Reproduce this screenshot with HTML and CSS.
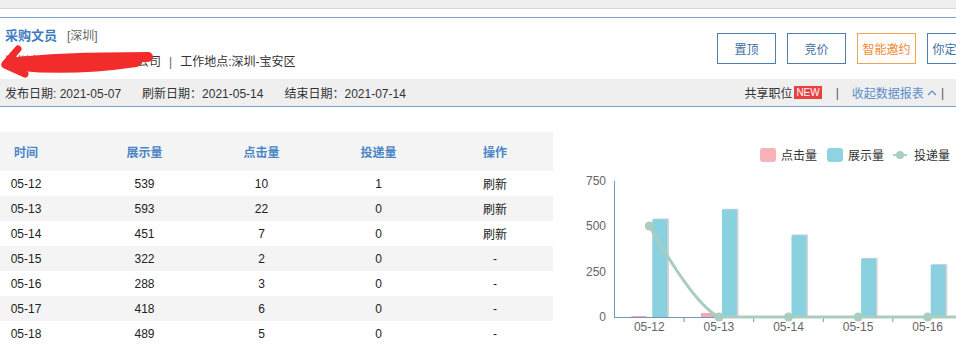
FILE: index.html
```html
<!DOCTYPE html>
<html lang="zh-CN">
<head>
<meta charset="utf-8">
<title>职位数据</title>
<link rel="stylesheet" href="styles.css">
</head>
<body>
<div class="topstrip"></div>
<div class="card">
  <div class="head">
    <div class="info">
      <div class="title-line"><span class="title">采购文员</span><span class="city">[深圳]</span></div>
      <div class="sub-line">
        <span class="company">深圳市某某某某科技有限公司</span><span class="sep">|</span><span>工作地点:深圳-宝安区</span>
        <svg class="scribble" width="160" height="36" viewBox="0 0 160 36">
          <g fill="none" stroke="#f22b2b" stroke-linecap="round" stroke-linejoin="round">
            <path d="M8 19 C40 15 100 13 147 13" stroke-width="10"/>
            <path d="M20 21 C60 25 100 22 135 17" stroke-width="12"/>
            <path d="M50 19 L125 16" stroke-width="14"/>
            <path d="M4 20 L17 5" stroke-width="7"/>
            <path d="M4 21 L24 30" stroke-width="7"/>
            <path d="M12 19 L40 22" stroke-width="9"/>
          </g>
        </svg>
      </div>
    </div>
    <div class="actions">
      <span class="btn">置顶</span>
      <span class="btn">竞价</span>
      <span class="btn btn-orange">智能邀约</span>
      <span class="btn">你定我推</span>
    </div>
  </div>
  <div class="bar">
    <div class="dates">
      <span>发布日期: 2021-05-07</span>
      <span>刷新日期：2021-05-14</span>
      <span>结束日期：2021-07-14</span>
    </div>
    <div class="bar-right">
      <span>共享职位</span><span class="new">NEW</span>
      <span class="pipe">|</span>
      <span class="link">收起数据报表</span>
      <svg class="caret" width="10" height="7" viewBox="0 0 10 7"><path d="M1 6 L5 2 L9 6" fill="none" stroke="#5b8ec7" stroke-width="1.2"/></svg>
      <span class="pipe2">|</span>
    </div>
  </div>
</div>
<div class="main">
  <div class="table">
    <div class="row thead"><span class="c1">时间</span><span>展示量</span><span>点击量</span><span>投递量</span><span>操作</span></div>
    <div class="row"><span class="c1">05-12</span><span>539</span><span>10</span><span>1</span><span>刷新</span></div>
    <div class="row alt"><span class="c1">05-13</span><span>593</span><span>22</span><span>0</span><span>刷新</span></div>
    <div class="row"><span class="c1">05-14</span><span>451</span><span>7</span><span>0</span><span>刷新</span></div>
    <div class="row alt"><span class="c1">05-15</span><span>322</span><span>2</span><span>0</span><span>-</span></div>
    <div class="row"><span class="c1">05-16</span><span>288</span><span>3</span><span>0</span><span>-</span></div>
    <div class="row alt"><span class="c1">05-17</span><span>418</span><span>6</span><span>0</span><span>-</span></div>
    <div class="row"><span class="c1">05-18</span><span>489</span><span>5</span><span>0</span><span>-</span></div>
  </div>
  <svg class="chart" width="403" height="218" viewBox="0 0 403 218">
    <g transform="translate(-553,-132)">
      <!-- legend -->
      <rect x="760" y="148" width="16" height="14" rx="3" fill="#f7b2b7"/>
      <text x="781" y="160" class="lg">点击量</text>
      <rect x="827" y="148" width="16" height="14" rx="3" fill="#8fd3e2"/>
      <text x="848" y="160" class="lg">展示量</text>
      <line x1="893" y1="155" x2="907" y2="155" stroke="#a9cdbf" stroke-width="2"/>
      <circle cx="900" cy="155" r="4" fill="#a9cdbf"/>
      <text x="914" y="160" class="lg">投递量</text>

      <!-- y axis -->
      <line x1="614.5" y1="181" x2="614.5" y2="317" stroke="#6b98bd" stroke-width="1"/>
      <text x="606" y="185" class="ax" text-anchor="end">750</text>
      <text x="606" y="230" class="ax" text-anchor="end">500</text>
      <text x="606" y="276" class="ax" text-anchor="end">250</text>
      <text x="606" y="321" class="ax" text-anchor="end">0</text>

      <!-- bars: shadow -->
      <g fill="#d4d4d4">
        <rect x="653.5" y="218.5" width="15.5" height="98.5"/>
        <rect x="723" y="208.7" width="15.5" height="108.3"/>
        <rect x="792.6" y="234.4" width="15.5" height="82.6"/>
        <rect x="862.2" y="257.8" width="15.5" height="59.2"/>
        <rect x="931.8" y="264" width="15.5" height="53"/>
      </g>
      <g fill="#8ad1df">
        <rect x="652.3" y="219.3" width="15" height="97.7"/>
        <rect x="721.9" y="209.5" width="15" height="107.5"/>
        <rect x="791.5" y="235.2" width="15" height="81.8"/>
        <rect x="861.1" y="258.6" width="15" height="58.4"/>
        <rect x="930.7" y="264.8" width="15" height="52.2"/>
      </g>
      <g fill="#f4a9b0">
        <rect x="631.3" y="316" width="15" height="1"/>
        <rect x="700.9" y="313" width="15" height="4"/>
        <rect x="770.5" y="316" width="15" height="1"/>
      </g>

      <!-- x axis -->
      <line x1="614" y1="317.5" x2="956" y2="317.5" stroke="#6b98bd" stroke-width="1.2"/>
      <g stroke="#6b98bd" stroke-width="1">
        <line x1="684.1" y1="317" x2="684.1" y2="322"/>
        <line x1="753.7" y1="317" x2="753.7" y2="322"/>
        <line x1="823.3" y1="317" x2="823.3" y2="322"/>
        <line x1="892.9" y1="317" x2="892.9" y2="322"/>
      </g>
      <text x="649.3" y="331" class="ax" text-anchor="middle">05-12</text>
      <text x="718.9" y="331" class="ax" text-anchor="middle">05-13</text>
      <text x="788.5" y="331" class="ax" text-anchor="middle">05-14</text>
      <text x="858.1" y="331" class="ax" text-anchor="middle">05-15</text>
      <text x="927.7" y="331" class="ax" text-anchor="middle">05-16</text>

      <!-- line -->
      <path d="M649.3 226 C666 254 696 306 718.9 317 L956 317" fill="none" stroke="#a9cdbf" stroke-width="3" stroke-linecap="round"/>
      <g fill="#a9cdbf">
        <circle cx="649.3" cy="226" r="4.5"/>
        <circle cx="718.9" cy="317" r="4.5"/>
        <circle cx="788.5" cy="317" r="4.5"/>
        <circle cx="858.1" cy="317" r="4.5"/>
        <circle cx="927.7" cy="317" r="4.5"/>
      </g>
    </g>
  </svg>
</div>
</body>
</html>
```

FILE: styles.css
```css
html, body {
  margin: 0;
  padding: 0;
  background: #ffffff;
  overflow: hidden;
  width: 956px;
  height: 350px;
  font-family: "Liberation Sans", "Noto Sans CJK SC", sans-serif;
  font-size: 12px;
  color: #333333;
}

.topstrip {
  height: 8px;
  background: #efefef;
  border-bottom: 1px solid #d6d6d6;
}

.card {
  margin-top: 8px;
  border-top: 1px solid #7ea2c6;
}

.head {
  display: flex;
  height: 61px;
  overflow: hidden;
}

.info {
  width: 712px;
  flex: none;
  padding-left: 5px;
  padding-top: 9px;
}

.title-line {
  height: 18px;
  line-height: 18px;
}

.title {
  font-size: 13px;
  font-weight: bold;
  color: #3e7cc0;
  margin-right: 10px;
}

.city {
  color: #666666;
  font-size: 12px;
}

.sub-line {
  position: relative;
  margin-top: 8px;
  height: 18px;
  line-height: 18px;
  color: #333333;
}

.sep {
  margin: 0 8px;
  color: #666666;
}

.scribble {
  position: absolute;
  left: -4px;
  top: -9px;
}

.actions {
  flex: none;
  display: flex;
  gap: 11px;
  padding-top: 15px;
}

.btn {
  box-sizing: border-box;
  width: 59px;
  height: 31px;
  border: 1px solid #4d7eae;
  color: #3f70a3;
  display: flex;
  align-items: center;
  justify-content: center;
  font-size: 12px;
  white-space: nowrap;
  overflow: hidden;
}

.btn-orange {
  border-color: #f0a458;
  color: #ef8a33;
}

.bar {
  height: 27px;
  background: #efefef;
  border-bottom: 1px solid #7ea2c6;
  display: flex;
  align-items: center;
  justify-content: space-between;
}

.dates {
  display: flex;
  gap: 21px;
  padding-left: 5px;
}

.bar-right {
  display: flex;
  align-items: center;
  padding-right: 12px;
}

.new {
  background: #e94040;
  color: #ffffff;
  font-size: 10px;
  line-height: 13px;
  padding: 0 2px;
  margin-left: 2px;
}

.pipe {
  margin: 0 13px 0 14px;
  color: #555555;
}

.link {
  color: #5b8ec7;
}

.caret {
  display: block;
  margin-left: 3px;
}

.pipe2 {
  margin-left: 4px;
  color: #555555;
}

.main {
  display: flex;
  margin-top: 25px;
}

.table {
  width: 553px;
  flex: none;
}

.row {
  display: grid;
  grid-template-columns: 86px 117px 117px 117px 116px;
  height: 25px;
  align-items: center;
  text-align: center;
  color: #222222;
  font-size: 12px;
}

.row .c1 {
  padding-right: 34px;
}

.row.alt {
  background: #f5f4f5;
}

.row.thead {
  height: 39px;
  background: #f5f4f5;
  color: #4a86c6;
  font-weight: bold;
  font-size: 12px;
}

.chart {
  flex: none;
  display: block;
}

.lg {
  font-family: "Noto Sans CJK SC", "Liberation Sans", sans-serif;
  font-size: 12px;
  fill: #333333;
}

.ax {
  font-family: "Liberation Sans", sans-serif;
  font-size: 12px;
  fill: #666666;
}
```
